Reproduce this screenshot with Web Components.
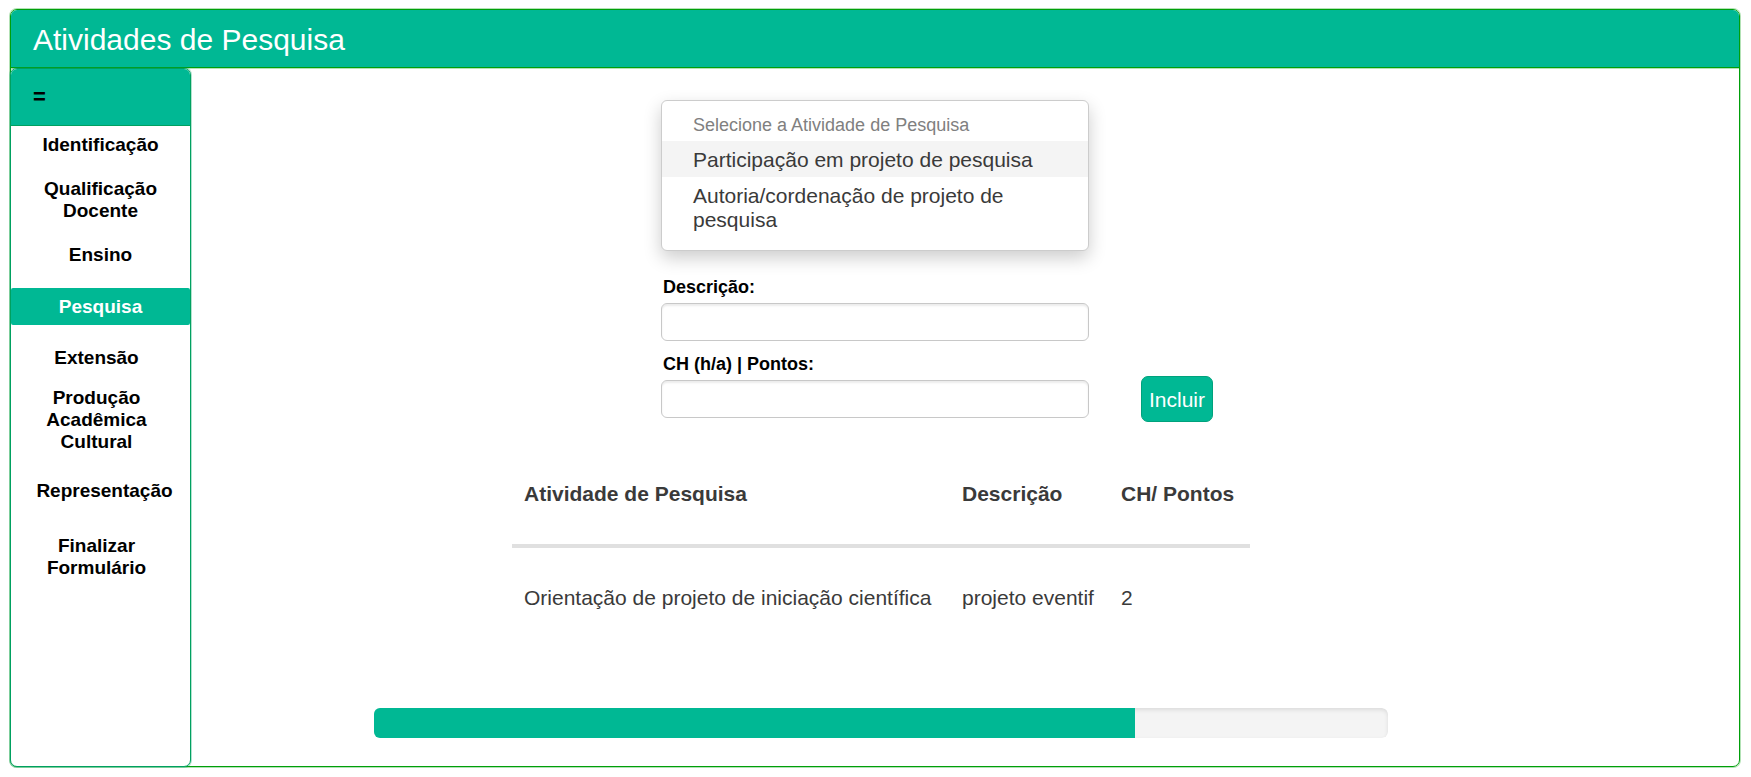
<!DOCTYPE html>
<html lang="pt-BR">
<head>
<meta charset="utf-8">
<meta name="viewport" content="width=device-width, initial-scale=1">
<title>Atividades de Pesquisa</title>
<style>
  html {
    --brand: #00b894;
    --brand-line: #00a060;
    --frame-line: #009f0a;
    --ink: #3a3a3a;
    --control-line: #c8c8c8;
  }
  body {
    margin: 0;
    background: #fff;
    color: #000;
    font-family: "Liberation Sans", Arial, sans-serif;
  }
</style>
</head>
<body>
<activity-page>
  <span slot="title">Atividades de Pesquisa</span>
  <side-nav slot="nav">
    <nav-item>Identificação</nav-item>
    <nav-item>Qualificação Docente</nav-item>
    <nav-item>Ensino</nav-item>
    <nav-item current>Pesquisa</nav-item>
    <nav-item lean="left">Extensão</nav-item>
    <nav-item lean="left" space="tight">Produção Acadêmica Cultural</nav-item>
    <nav-item lean="right" space="loose">Representação</nav-item>
    <nav-item lean="left" space="section">Finalizar Formulário</nav-item>
  </side-nav>
  <activity-form></activity-form>
  <activity-table></activity-table>
  <step-progress value="75"></step-progress>
</activity-page>

<script>
  const define = (name, html, setup) => {
    const template = document.createElement('template');
    template.innerHTML = html;
    customElements.define(name, class extends HTMLElement {
      constructor() {
        super();
        this.attachShadow({ mode: 'open' }).append(template.content.cloneNode(true));
      }
      connectedCallback() {
        if (setup) setup(this, this.shadowRoot);
      }
    });
  };

  define('activity-page', `
    <style>
      :host { display: flex; box-sizing: border-box; min-height: 100vh; padding: 9px 11px 10px 10px; }
      .frame { flex: 1; min-width: 0; display: flex; flex-direction: column; border: 1px solid var(--frame-line); border-radius: 7px; box-shadow: 0 0 0 1px rgba(0, 159, 10, .3); }
      header { padding: 13px 22px 11px; background: var(--brand); border-bottom: 1px solid var(--frame-line); border-radius: 6px 6px 0 0; box-shadow: 0 1px 0 rgba(0, 159, 10, .3); }
      h1 { margin: 0; font-size: 30px; line-height: 33px; font-weight: 400; color: #fff; }
      .body { flex: 1; display: flex; margin: 0 0 -1px -1px; }
      main { flex: 1; min-width: 0; display: flex; flex-direction: column; align-items: center; padding: 32px 168px 28px 0; }
    </style>
    <div class="frame">
      <header><h1><slot name="title"></slot></h1></header>
      <div class="body">
        <slot name="nav"></slot>
        <main><slot></slot></main>
      </div>
    </div>`);

  define('side-nav', `
    <style>
      :host { display: block; box-sizing: border-box; flex: none; width: 181px; border: 1px solid var(--brand-line); border-radius: 7px; background: #fff; box-shadow: 0 0 0 1px rgba(0, 160, 96, .3); }
      .top { padding: 16px 16px; background: var(--brand); border-bottom: 1px solid var(--brand-line); border-radius: 6px 6px 0 0; }
      button { display: block; margin: 0; padding: 0 6px; border: 0; background: none; font: 700 22px/24px "Liberation Sans", Arial, sans-serif; color: #000; cursor: pointer; }
      nav { padding-top: 8px; }
      ::slotted(:first-child) { margin-top: 0; }
    </style>
    <div class="top"><button type="button" aria-label="Menu">=</button></div>
    <nav><slot></slot></nav>`);

  define('nav-item', `
    <style>
      :host { display: block; margin-top: 22px; font-size: 19px; line-height: 22px; font-weight: 700; text-align: center; }
      :host([space="tight"]) { margin-top: 18px; }
      :host([space="loose"]) { margin-top: 27px; }
      :host([space="section"]) { margin-top: 33px; }
      a { display: block; padding: 0 20px; color: inherit; text-decoration: none; }
      :host([lean="left"]) a { padding: 0 28px 0 20px; }
      :host([lean="right"]) a { padding: 0 12px 0 20px; }
      :host([current]) { color: #fff; background: var(--brand); border-radius: 2px; }
      :host([current]) a { padding: 8px 20px 7px; }
    </style>
    <a href="#"><slot></slot></a>`, (host, root) => {
      if (host.hasAttribute('current')) root.querySelector('a').setAttribute('aria-current', 'page');
    });

  define('activity-menu', `
    <style>
      :host { display: block; box-sizing: border-box; padding: 6px 0 13px; background: #fff; border: 1px solid #ccc; border-radius: 6px; box-shadow: 0 7px 18px rgba(0, 0, 0, .2); }
      h2 { margin: 0; padding: 7px 31px 5px; font-size: 18px; line-height: 22px; font-weight: 400; color: #808080; }
      ul { margin: 0; padding: 0; list-style: none; }
      a { display: block; padding: 7px 31px 5px; font-size: 21px; line-height: 24px; color: var(--ink); text-decoration: none; }
      a.active { background: #f4f4f4; }
    </style>
    <h2>Selecione a Atividade de Pesquisa</h2>
    <ul>
      <li><a class="active" href="#">Participação em projeto de pesquisa</a></li>
      <li><a href="#">Autoria/cordenação de projeto de pesquisa</a></li>
    </ul>`);

  define('text-field', `
    <style>
      :host { display: flex; flex-direction: column; gap: 5px; }
      label { padding-left: 2px; font-size: 18px; line-height: 22px; font-weight: 700; }
      input { box-sizing: border-box; width: 100%; height: 38px; margin: 0; padding: 0 12px; border: 1px solid var(--control-line); border-radius: 6px; background: #fff; box-shadow: inset 0 2px 2px rgba(0, 0, 0, .08); font: 21px/24px "Liberation Sans", Arial, sans-serif; color: var(--ink); }
    </style>
    <label for="field"><slot></slot></label>
    <input id="field" type="text">`);

  define('activity-form', `
    <style>
      :host { display: block; align-self: stretch; }
      form { display: grid; grid-template-columns: 1fr 428px 1fr; column-gap: 52px; padding-right: 12px; }
      activity-menu, text-field { grid-column: 2; }
      activity-menu { margin-bottom: 25px; }
      .first { margin-bottom: 12px; }
      button { grid-column: 3; place-self: end start; box-sizing: border-box; height: 46px; margin: 0 0 -4px; padding: 2px 7px 0; border: 1px solid #00a27c; border-radius: 7px; background: var(--brand); color: #fff; font: 21px/24px "Liberation Sans", Arial, sans-serif; cursor: pointer; }
    </style>
    <form>
      <activity-menu></activity-menu>
      <text-field class="first">Descrição:</text-field>
      <text-field>CH (h/a) | Pontos:</text-field>
      <button type="button">Incluir</button>
    </form>`);

  define('activity-table', `
    <style>
      :host { display: block; margin-top: 26px; }
      table { width: 738px; border-collapse: separate; border-spacing: 0; table-layout: fixed; color: var(--ink); font-size: 21px; line-height: 24px; }
      .name { width: 438px; }
      .text { width: 159px; }
      th, td { padding: 38px 12px; text-align: left; white-space: nowrap; }
      th { border-bottom: 4px solid #e0e0e0; }
    </style>
    <table>
      <colgroup><col class="name"><col class="text"><col></colgroup>
      <thead><tr><th scope="col">Atividade de Pesquisa</th><th scope="col">Descrição</th><th scope="col">CH/ Pontos</th></tr></thead>
      <tbody><tr><td>Orientação de projeto de iniciação científica</td><td>projeto eventif</td><td>2</td></tr></tbody>
    </table>`);

  define('step-progress', `
    <style>
      :host { display: block; width: 1014px; max-width: 100%; margin-top: 60px; }
      progress { display: block; width: 100%; height: 30px; border: 0; border-radius: 6px; overflow: hidden; appearance: none; -webkit-appearance: none; }
      progress::-webkit-progress-bar { background: #f4f4f4; border-radius: 6px; box-shadow: inset 0 2px 4px rgba(0, 0, 0, .1); }
      progress::-webkit-progress-value { background: var(--brand); }
    </style>
    <progress max="100" aria-label="Progresso do formulário"></progress>`, (host, root) => {
      root.querySelector('progress').value = Number(host.getAttribute('value'));
    });
</script>
</body>
</html>
